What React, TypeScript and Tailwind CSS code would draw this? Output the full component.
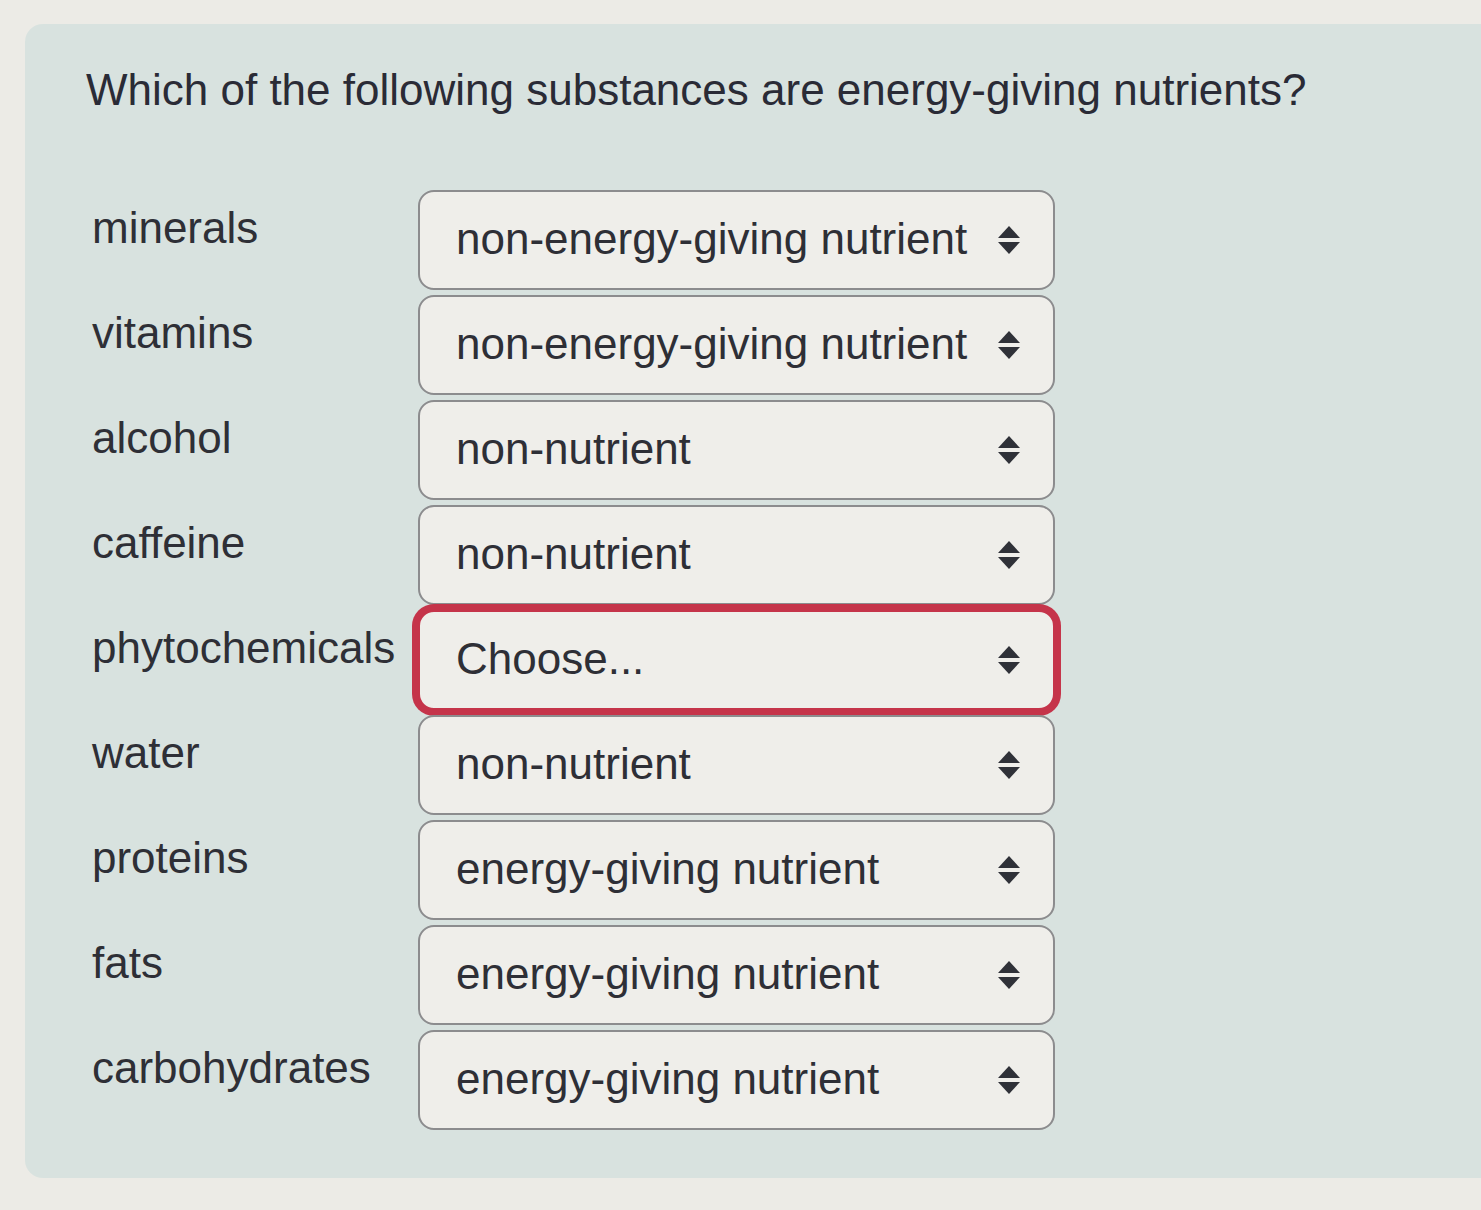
import { useState } from 'react';

type Row = { term: string; value: string; invalid?: boolean };

const rows: Row[] = [
  { term: 'minerals', value: 'non-energy-giving nutrient' },
  { term: 'vitamins', value: 'non-energy-giving nutrient' },
  { term: 'alcohol', value: 'non-nutrient' },
  { term: 'caffeine', value: 'non-nutrient' },
  { term: 'phytochemicals', value: 'Choose...', invalid: true },
  { term: 'water', value: 'non-nutrient' },
  { term: 'proteins', value: 'energy-giving nutrient' },
  { term: 'fats', value: 'energy-giving nutrient' },
  { term: 'carbohydrates', value: 'energy-giving nutrient' },
];

function UpDown() {
  return (
    <svg width="24" height="32" viewBox="0 0 24 32" className="shrink-0">
      <path d="M12 2 L23 14 H1 Z" fill="#2f3138" />
      <path d="M1 18 H23 L12 30 Z" fill="#2f3138" />
    </svg>
  );
}

function Select({ row }: { row: Row }) {
  const [open, setOpen] = useState(false);
  return (
    <button
      type="button"
      onClick={() => setOpen(!open)}
      className={
        row.invalid
          ? 'flex h-[100px] w-[637px] items-center justify-between rounded-[16px] border-2 border-[#c5344a] bg-[#efeeea] pl-[36px] pr-[32px] text-left shadow-[0_0_0_6px_#c5344a]'
          : 'flex h-[100px] w-[637px] items-center justify-between rounded-[16px] border-2 border-[#8c8c8e] bg-[#efeeea] pl-[36px] pr-[32px] text-left'
      }
    >
      <span className="text-[44px] leading-[1.2] text-[#2e2f36]">{row.value}</span>
      <UpDown />
    </button>
  );
}

export default function App() {
  return (
    <div className="min-h-[1210px] bg-[#ecebe6] pl-[25px] pt-[24px] font-['Liberation_Sans',Arial,sans-serif]">
      <div className="rounded-l-[18px] bg-[#d8e2df] pb-[48px] pl-[61px] pt-[40px]">
        {/* Question */}
        <h1 className="text-[44px] font-normal leading-[1.2] text-[#2a2b36]">
          Which of the following substances are energy-giving nutrients?
        </h1>

        {/* Matching rows */}
        <div className="mt-[73px] flex flex-col gap-[5px]">
          {rows.map((row) => (
            <div key={row.term} className="flex items-start">
              <div className="w-[332px] pl-[6px] pt-[12px] text-[44px] leading-[1.2] text-[#2e2f36]">
                {row.term}
              </div>
              <Select row={row} />
            </div>
          ))}
        </div>
      </div>
    </div>
  );
}
